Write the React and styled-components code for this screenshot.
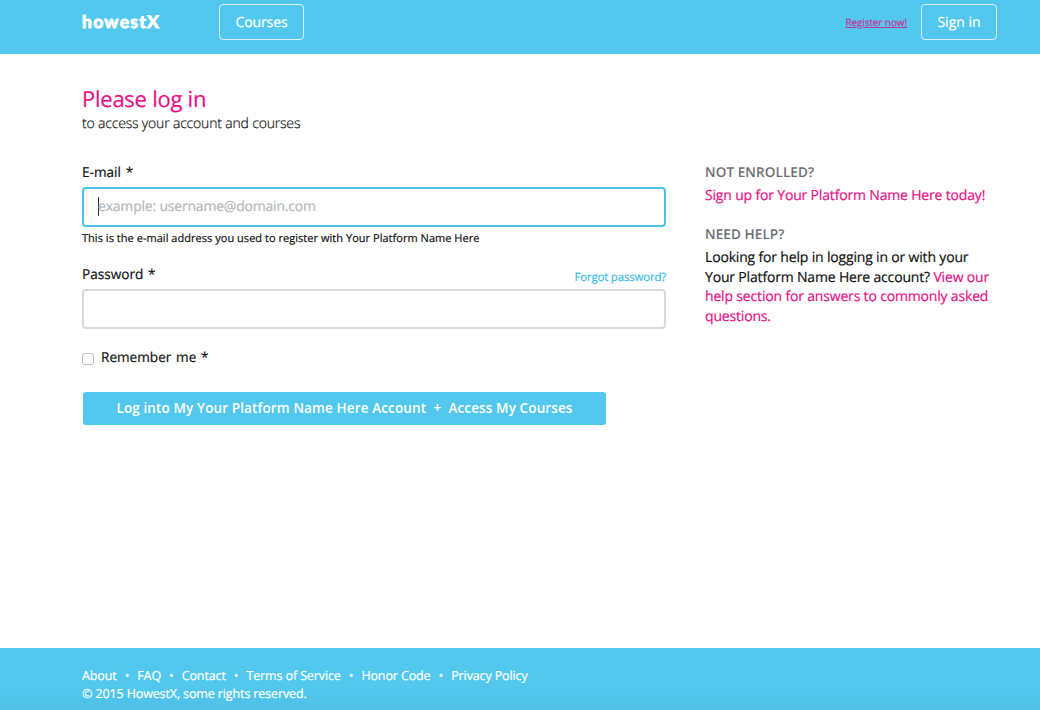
import React from "react";
import styled, { createGlobalStyle } from "styled-components";

const BLUE = "#52c8ef";
const PINK = "#ea1085";

const GlobalStyle = createGlobalStyle`
  * { box-sizing: border-box; }
  body {
    margin: 0;
    background: #fff;
    color: #111;
    font-family: "Open Sans", "Noto Sans", sans-serif;
    text-rendering: geometricPrecision;
    -webkit-text-stroke: 0.2px currentColor;
  }
  a { color: inherit; text-decoration: none; }
`;

const Page = styled.div`
  display: flex;
  flex-direction: column;
  width: 1040px;
  height: 710px;
  overflow: hidden;
`;

const Header = styled.header`
  display: flex;
  align-items: flex-start;
  height: 54px;
  padding: 4px 43px 0 82px;
  background: ${BLUE};
`;

const Logo = styled.a`
  width: 137px;
  padding-top: 6px;
  color: #fff;
  font: 900 17.5px/24px Lato, sans-serif;
  letter-spacing: 1.25px;
  white-space: nowrap;
  -webkit-text-stroke: 0.8px #fff;
`;

const NavButton = styled.a`
  display: flex;
  justify-content: center;
  width: ${(p) => p.$width}px;
  height: 36px;
  border: 1px solid #d9f3fc;
  border-radius: 4px;
  color: #fff;
  font-size: 14px;
  line-height: 35px;
  letter-spacing: ${(p) => p.$tracking || 0}px;
`;

const Register = styled.a`
  margin: 11px 14px 0 auto;
  color: #c92f98;
  font-size: 10px;
  line-height: 14px;
  letter-spacing: -0.1px;
  text-decoration: underline;
`;

const Main = styled.main`
  display: flex;
  flex: 1;
  gap: 39px;
  padding: 31px 43px 0 82px;
`;

const LoginColumn = styled.section`
  flex: none;
  width: 584px;
`;

const Title = styled.h1`
  margin: 0;
  color: ${PINK};
  font-size: 22px;
  font-weight: 400;
  line-height: 28px;
  letter-spacing: -0.25px;
`;

const Subtitle = styled.p`
  margin: 1px 0 28px;
  color: #111;
  font-size: 14px;
  font-weight: 300;
  line-height: 20px;
  letter-spacing: -0.18px;
`;

const FieldHead = styled.div`
  display: flex;
  align-items: flex-end;
  justify-content: space-between;
  height: 20px;
  margin-bottom: 5px;
`;

const Label = styled.label`
  font-size: 13.6px;
  line-height: 20px;
  word-spacing: 1.2px;
`;

const ForgotLink = styled.a`
  color: #38bdec;
  font-size: 11.5px;
  line-height: 13px;
  letter-spacing: -0.2px;
`;

const Field = styled.div`
  display: flex;
  align-items: center;
  height: 40px;
  padding: 0 13px 2px 14px;
  border: 2px solid ${(p) => (p.$focused ? "#4ac3ea" : "#d9d9d9")};
  border-radius: 4px;
  background: #fff;
`;

const Caret = styled.span`
  width: 1px;
  height: 19px;
  margin-right: -1px;
  background: #333;
`;

const Placeholder = styled.span`
  color: #b3b8bb;
  font-size: 14px;
  letter-spacing: -0.2px;
`;

const Hint = styled.p`
  margin: 4px 0 18px;
  font-size: 11px;
  line-height: 15px;
  letter-spacing: 0.035px;
`;

const RememberRow = styled.div`
  display: flex;
  align-items: center;
  gap: 7px;
  margin-top: 18px;
`;

const Checkbox = styled.span`
  width: 12px;
  height: 12px;
  margin-top: 4px;
  border: 1px solid #bdbdbd;
  border-radius: 3px;
`;

const SubmitButton = styled.button`
  display: block;
  width: 523px;
  height: 33px;
  margin: 25px 0 0 1px;
  padding: 0;
  border: 0;
  border-radius: 3px;
  background: ${BLUE};
  color: #fff;
  font: 600 13.5px/33px "Open Sans", sans-serif;
  letter-spacing: 0.12px;
  white-space: pre;
  -webkit-text-stroke: 0;
`;

const Aside = styled.aside`
  width: 300px;
  padding-top: 77px;
  font-size: 14px;
  line-height: 19.5px;
  letter-spacing: -0.17px;
  white-space: nowrap;
`;

const AsideTitle = styled.h2`
  margin: 0 0 4px;
  color: #6d6e72;
  font-size: 13.5px;
  font-weight: 600;
  line-height: 20px;
  letter-spacing: 0.1px;
  -webkit-text-stroke: 0;
`;

const AsideText = styled.p`
  margin: 0 0 18.5px;
`;

const PinkLink = styled.a`
  color: ${PINK};
`;

const Footer = styled.footer`
  height: 62px;
  padding: 19px 82px 0;
  background: linear-gradient(#52c8ef 60%, #4fc1e7);
  color: #fff;
  font-size: 12.5px;
  font-weight: 500;
  line-height: 17.5px;
  letter-spacing: -0.12px;
`;

const FooterLinks = styled.nav`
  display: flex;
`;

const Dot = styled.span`
  width: 20.7px;
  text-align: center;
`;

const links = ["About", "FAQ", "Contact", "Terms of Service", "Honor Code", "Privacy Policy"];

export default function App() {
  return (
    <Page>
      <GlobalStyle />
      <Header>
        <Logo>howestX</Logo>
        <NavButton $width={85} $tracking={-0.1}>Courses</NavButton>
        <Register>Register now!</Register>
        <NavButton $width={76}>Sign in</NavButton>
      </Header>
      <Main>
        <LoginColumn>
          <Title>Please log in</Title>
          <Subtitle>to access your account and courses</Subtitle>
          <FieldHead>
            <Label>E-mail *</Label>
          </FieldHead>
          <Field $focused>
            <Caret />
            <Placeholder>example: username@domain.com</Placeholder>
          </Field>
          <Hint>This is the e-mail address you used to register with Your Platform Name Here</Hint>
          <FieldHead>
            <Label>Password *</Label>
            <ForgotLink>Forgot password?</ForgotLink>
          </FieldHead>
          <Field />
          <RememberRow>
            <Checkbox />
            <Label>Remember me *</Label>
          </RememberRow>
          <SubmitButton>{"Log into My Your Platform Name Here Account  +  Access My Courses"}</SubmitButton>
        </LoginColumn>
        <Aside>
          <AsideTitle>NOT ENROLLED?</AsideTitle>
          <AsideText>
            <PinkLink>Sign up for Your Platform Name Here today!</PinkLink>
          </AsideText>
          <AsideTitle>NEED HELP?</AsideTitle>
          <AsideText>
            Looking for help in logging in or with your<br />
            Your Platform Name Here account? <PinkLink>View our<br />
            help section for answers to commonly asked<br />
            questions.</PinkLink>
          </AsideText>
        </Aside>
      </Main>
      <Footer>
        <FooterLinks>
          {links.map((name, i) => (
            <React.Fragment key={name}>
              {i > 0 && <Dot>•</Dot>}
              <a>{name}</a>
            </React.Fragment>
          ))}
        </FooterLinks>
        <div>© 2015 HowestX, some rights reserved.</div>
      </Footer>
    </Page>
  );
}
